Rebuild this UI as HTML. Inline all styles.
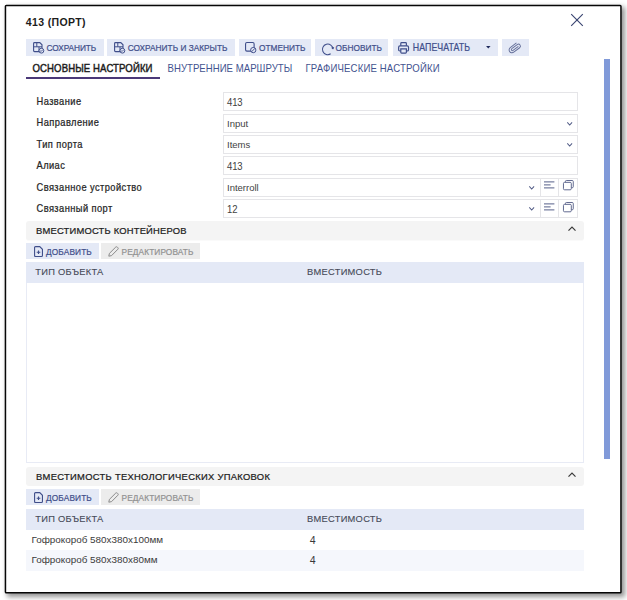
<!DOCTYPE html>
<html lang="ru">
<head>
<meta charset="utf-8">
<title>413 (ПОРТ)</title>
<style>
*{box-sizing:border-box;margin:0;padding:0}
html,body{width:627px;height:600px;background:#fff;overflow:hidden}
body{font-family:"Liberation Sans",sans-serif;color:#222;position:relative;font-size:10px}
.frame{position:absolute;left:5px;top:5px;width:616px;height:588px;background:#fff;box-shadow:3px 3px 5px 1px rgba(0,0,0,.42)}
.abs{position:absolute}
.title{left:25.7px;top:15px;font-weight:bold;font-size:10.5px;line-height:14px;color:#1c1c1c;white-space:nowrap;letter-spacing:.38px}
.btn{position:absolute;top:39px;height:17px;background:#e4e9f6;color:#3f4e8a;font-size:8.3px;line-height:17px;white-space:nowrap;-webkit-text-stroke:.18px #3f4e8a}
.btn span{position:absolute;top:0;line-height:17.5px;transform:scaleY(1.2);transform-origin:0 6px}
.btn svg{position:absolute;overflow:visible}
.btn.dis{background:#ececec;color:#929292;-webkit-text-stroke:.2px #929292}
.tab{position:absolute;top:62px;font-size:9.6px;line-height:14px;white-space:nowrap;color:#43538f;transform:scaleY(1.1);transform-origin:0 10.6px}
.tab.act{color:#1c1c1c;-webkit-text-stroke:.4px #1c1c1c;letter-spacing:.1px}
.lbl{position:absolute;left:36.5px;font-size:9.3px;line-height:14px;color:#262626;white-space:nowrap;letter-spacing:.43px;-webkit-text-stroke:.22px #262626;transform:scaleY(1.1);transform-origin:0 10.2px}
.inp{position:absolute;left:223px;height:19px;border:1px solid #e5e5e8;background:#fff;font-size:9.5px;line-height:18px;padding-left:3px;color:#424242;white-space:nowrap}
.num{display:inline-block;transform:translateY(1px) scaleY(1.17);transform-origin:0 12.5px;letter-spacing:-.1px}
.cell{position:absolute;height:19px;border:1px solid #e5e5e8;border-left:0;background:#fff}
.sec{position:absolute;left:26px;width:558px;height:19px;background:#f4f4f4;border-radius:3px;font-size:9.4px;line-height:19.5px;padding-left:10px;color:#1c1c1c;letter-spacing:.2px;white-space:nowrap;-webkit-text-stroke:.22px #1c1c1c}
.th{position:absolute;left:26px;width:558px;height:20.5px;background:#e4e9f6;font-size:9.3px;line-height:21.6px;color:#464a58;letter-spacing:.28px;white-space:nowrap;-webkit-text-stroke:.12px #464a58}
.th span{position:absolute;top:0}
.td{position:absolute;font-size:9.9px;line-height:20px;color:#3a3a3a;white-space:nowrap;letter-spacing:0}
svg{overflow:visible}
</style>
</head>
<body>
<div class="frame"></div>
<svg class="abs" style="left:0;top:0" width="627" height="600" viewBox="0 0 627 600"><rect x="5.45" y="5.5" width="615.5" height="587.3" rx="0.8" fill="#fff" stroke="#060606" stroke-width="1.5"/></svg>

<div class="abs title">413 (ПОРТ)</div>
<svg class="abs" style="left:571px;top:13.5px" width="12" height="12" viewBox="0 0 12 12"><path d="M0.2 0.2 L11.8 11.8 M11.8 0.2 L0.2 11.8" stroke="#3b4672" stroke-width="1.15" fill="none"/></svg>

<!-- toolbar -->
<div class="btn" style="left:26px;width:77.5px"><span style="left:20.5px;letter-spacing:-.08px">СОХРАНИТЬ</span><svg style="left:7px;top:3.4px" width="12" height="12" viewBox="0 0 12 12" fill="none" stroke="#3f4e8a" stroke-width="1.1"><path d="M1.5 0.6 H6.8 L9 2.8 V8.6 Q9 9.6 8 9.6 H1.5 Q0.6 9.6 0.6 8.6 V1.5 Q0.6 0.6 1.5 0.6 Z"/><path d="M0.6 4.8 H9 M3.8 0.6 V4.8 M6 4.8 V9.6" stroke-width="1"/><circle cx="8.4" cy="8.7" r="2.4" fill="#e4e9f6" stroke-width="1"/><path d="M7.3 8.8 L8.1 9.5 L9.5 8" stroke-width=".9"/></svg></div>
<div class="btn" style="left:107px;width:128px"><span style="left:20.7px">СОХРАНИТЬ И ЗАКРЫТЬ</span><svg style="left:7.3px;top:3.4px" width="12" height="12" viewBox="0 0 12 12" fill="none" stroke="#3f4e8a" stroke-width="1.1"><path d="M1.5 0.6 H6.8 L9 2.8 V8.6 Q9 9.6 8 9.6 H1.5 Q0.6 9.6 0.6 8.6 V1.5 Q0.6 0.6 1.5 0.6 Z"/><path d="M0.6 4.8 H9 M3.8 0.6 V4.8 M6 4.8 V9.6" stroke-width="1"/><circle cx="8.4" cy="8.7" r="2.4" fill="#e4e9f6" stroke-width="1"/><path d="M7.3 8.8 L8.1 9.5 L9.5 8" stroke-width=".9"/></svg></div>
<div class="btn" style="left:239px;width:72px"><span style="left:20px">ОТМЕНИТЬ</span><svg style="left:6.4px;top:2.9px" width="11.4" height="11.4" viewBox="0 0 12 12" fill="none" stroke="#3f4e8a" stroke-width="1.15"><rect x="0.6" y="0.6" width="9" height="9" rx="1.4"/><circle cx="8.7" cy="8.5" r="2.8" fill="#e4e9f6" stroke-width="1"/><path d="M6.8 10.4 L10.6 6.6" stroke-width="1"/></svg></div>
<div class="btn" style="left:315px;width:73px"><span style="left:20.6px">ОБНОВИТЬ</span><svg style="left:7.1px;top:3.5px" width="12.7" height="12.7" viewBox="0 0 12 12" fill="none" stroke="#3f4e8a" stroke-width="1"><path d="M10.4 5.6 A5 5 0 1 0 8.2 10.2"/><path d="M8.6 4.4 L10.5 6.2 L11.6 3.9 Z" fill="#3f4e8a" stroke="none"/></svg></div>
<div class="btn" style="left:392.5px;width:105.5px"><span style="left:20.3px;font-size:8.8px;letter-spacing:.05px;-webkit-text-stroke:.2px #43538f">НАПЕЧАТАТЬ</span><svg style="left:93.4px;top:6.6px" width="4.6" height="2.7" viewBox="0 0 5 3"><path d="M0 0 H5 L2.5 2.8 Z" fill="#1f2a5c"/></svg><svg style="left:5.9px;top:2.8px" width="12.9" height="12.9" viewBox="0 0 12 12" fill="none" stroke="#3f4e8a" stroke-width="1.1"><path d="M2.6 3.6 V1.4 Q2.6 0.6 3.4 0.6 H7 Q7.8 0.6 7.8 1.4 V3.6"/><path d="M2.6 8.4 H1.8 Q0.6 8.4 0.6 7.2 V4.8 Q0.6 3.6 1.8 3.6 H8.6 Q9.8 3.6 9.8 4.8 V7.2 Q9.8 8.4 8.6 8.4 H7.8"/><path d="M2.6 6.4 H7.8 V9.6 Q7.8 10.4 7 10.4 H3.4 Q2.6 10.4 2.6 9.6 Z"/></svg></div>
<div class="btn" style="left:502px;width:27px"><svg style="left:7.2px;top:3px" width="12.6" height="10.8" viewBox="0 0 14 12" fill="none" stroke="#65709a" stroke-width="1.05"><g transform="rotate(-37 7 6)"><path d="M3 4.8 H10.6 A2.2 2.2 0 0 1 10.6 9.2 H2.4 A3.2 3.2 0 0 1 2.4 2.8 H11"/><path d="M3 4.8 A1.2 1.2 0 0 0 3 7.2 H10.4"/></g></svg></div>

<!-- tabs -->
<div class="tab act" style="left:32.5px">ОСНОВНЫЕ НАСТРОЙКИ</div>
<div class="tab" style="left:167.5px;letter-spacing:.03px">ВНУТРЕННИЕ МАРШРУТЫ</div>
<div class="tab" style="left:305.5px;letter-spacing:.15px">ГРАФИЧЕСКИЕ НАСТРОЙКИ</div>
<div class="abs" style="left:26px;top:77px;width:134px;height:2px;background:#4a3878"></div>

<!-- form -->
<div class="lbl" style="top:95px">Название</div>
<div class="lbl" style="top:116px">Направление</div>
<div class="lbl" style="top:138px">Тип порта</div>
<div class="lbl" style="top:159px">Алиас</div>
<div class="lbl" style="top:181px">Связанное устройство</div>
<div class="lbl" style="top:202px">Связанный порт</div>

<div class="inp" style="top:92px;width:354.5px;"><span class="num">413</span></div>
<div class="inp" style="top:113.5px;width:354.5px">Input</div>
<div class="inp" style="top:134.7px;width:354.5px">Items</div>
<div class="inp" style="top:156.1px;width:354.5px;"><span class="num">413</span></div>
<div class="inp" style="top:177.5px;width:317.5px">Interroll</div>
<div class="cell" style="top:177.5px;left:540.5px;width:18.5px"></div>
<div class="cell" style="top:177.5px;left:559px;width:18.5px"></div>
<div class="inp" style="top:198.9px;width:317.5px;"><span class="num">12</span></div>
<div class="cell" style="top:198.9px;left:540.5px;width:18.5px"></div>
<div class="cell" style="top:198.9px;left:559px;width:18.5px"></div>

<!-- section 1 -->
<div class="sec" style="top:221px;height:20px;border-bottom:1px solid #fafafa;line-height:19.5px">ВМЕСТИМОСТЬ КОНТЕЙНЕРОВ</div>
<div class="btn" style="left:26px;top:243px;width:72.5px;height:16px"><span style="left:20px;line-height:16.5px;letter-spacing:.13px">ДОБАВИТЬ</span><svg style="left:7.7px;top:2.6px" width="9.6" height="11.5" viewBox="0 0 10 12" fill="none" stroke="#3f4e8a" stroke-width="1.15"><path d="M1.6 0.6 H6 L8.8 3.4 V10 Q8.8 11 7.8 11 H1.6 Q0.6 11 0.6 10 V1.6 Q0.6 0.6 1.6 0.6 Z"/><path d="M4.7 4.6 V8.4 M2.8 6.5 H6.6" stroke-width="1.2"/></svg></div>
<div class="btn dis" style="left:101px;top:243px;width:98.5px;height:16px"><span style="left:20.6px;line-height:16.5px;letter-spacing:.1px">РЕДАКТИРОВАТЬ</span><svg style="left:7.2px;top:2.8px" width="11" height="11" viewBox="0 0 11 11" fill="none" stroke="#8a8a8a" stroke-width="1"><path d="M0.8 10.2 L1.4 7.4 L7.8 1 Q8.6 0.4 9.4 1.2 L9.9 1.7 Q10.6 2.5 9.9 3.2 L3.6 9.6 Z"/></svg></div>
<div class="th" style="top:262px;height:21px"><span style="left:9.3px">ТИП ОБЪЕКТА</span><span style="left:281px">ВМЕСТИМОСТЬ</span></div>
<div class="abs" style="left:26px;top:283px;width:558px;height:180px;border:1px solid #e8ebf5;border-top:0"></div>

<!-- section 2 -->
<div class="sec" style="top:467px;letter-spacing:.3px">ВМЕСТИМОСТЬ ТЕХНОЛОГИЧЕСКИХ УПАКОВОК</div>
<div class="btn" style="left:26px;top:489px;width:72.5px;height:16px"><span style="left:20px;line-height:16.5px;letter-spacing:.13px">ДОБАВИТЬ</span><svg style="left:7.7px;top:2.6px" width="9.6" height="11.5" viewBox="0 0 10 12" fill="none" stroke="#3f4e8a" stroke-width="1.15"><path d="M1.6 0.6 H6 L8.8 3.4 V10 Q8.8 11 7.8 11 H1.6 Q0.6 11 0.6 10 V1.6 Q0.6 0.6 1.6 0.6 Z"/><path d="M4.7 4.6 V8.4 M2.8 6.5 H6.6" stroke-width="1.2"/></svg></div>
<div class="btn dis" style="left:101px;top:489px;width:98.5px;height:16px"><span style="left:20.6px;line-height:16.5px;letter-spacing:.1px">РЕДАКТИРОВАТЬ</span><svg style="left:7.2px;top:2.8px" width="11" height="11" viewBox="0 0 11 11" fill="none" stroke="#8a8a8a" stroke-width="1"><path d="M0.8 10.2 L1.4 7.4 L7.8 1 Q8.6 0.4 9.4 1.2 L9.9 1.7 Q10.6 2.5 9.9 3.2 L3.6 9.6 Z"/></svg></div>
<div class="th" style="top:509px"><span style="left:9.3px">ТИП ОБЪЕКТА</span><span style="left:281px">ВМЕСТИМОСТЬ</span></div>
<div class="abs" style="left:26px;top:550px;width:558px;height:20.5px;background:#f5f7fc"></div>
<div class="td" style="left:31.5px;top:529.5px">Гофрокороб 580x380x100мм</div>
<div class="td" style="left:309.8px;top:529.5px;font-size:10.6px">4</div>
<div class="td" style="left:31.5px;top:550px">Гофрокороб 580x380x80мм</div>
<div class="td" style="left:309.8px;top:550px;font-size:10.6px">4</div>

<svg class="abs" style="left:566.8px;top:121.5px" width="5.4" height="3.6" viewBox="0 0 5.4 3.6" fill="none" stroke="#545e88" stroke-width="1.05"><path d="M0.3 0.4 L2.7 3 L5.1 0.4"/></svg>
<svg class="abs" style="left:566.8px;top:142.9px" width="5.4" height="3.6" viewBox="0 0 5.4 3.6" fill="none" stroke="#545e88" stroke-width="1.05"><path d="M0.3 0.4 L2.7 3 L5.1 0.4"/></svg>
<svg class="abs" style="left:529.2px;top:185.7px" width="5.4" height="3.6" viewBox="0 0 5.4 3.6" fill="none" stroke="#545e88" stroke-width="1.05"><path d="M0.3 0.4 L2.7 3 L5.1 0.4"/></svg>
<svg class="abs" style="left:529.2px;top:207.1px" width="5.4" height="3.6" viewBox="0 0 5.4 3.6" fill="none" stroke="#545e88" stroke-width="1.05"><path d="M0.3 0.4 L2.7 3 L5.1 0.4"/></svg>
<svg class="abs" style="left:544.2px;top:181.2px" width="11" height="8" viewBox="0 0 11 8" fill="none" stroke="#566089" stroke-width="1"><path d="M0 0.9 H10.4 M0 3.9 H6.6 M0 6.9 H10.4"/></svg>
<svg class="abs" style="left:544.2px;top:202.6px" width="11" height="8" viewBox="0 0 11 8" fill="none" stroke="#566089" stroke-width="1"><path d="M0 0.9 H10.4 M0 3.9 H6.6 M0 6.9 H10.4"/></svg>
<svg class="abs" style="left:562.6px;top:180.4px" width="11.2" height="10.3" viewBox="0 0 12 11" fill="none" stroke="#566089" stroke-width="1"><path d="M2.6 2.4 V1.6 Q2.6 0.5 3.7 0.5 H9.9 Q11 0.5 11 1.6 V7.2 Q11 8.3 9.9 8.3 H9"/><rect x="0.5" y="2.5" width="8.4" height="8" rx="1.2"/></svg>
<svg class="abs" style="left:562.6px;top:201.8px" width="11.2" height="10.3" viewBox="0 0 12 11" fill="none" stroke="#566089" stroke-width="1"><path d="M2.6 2.4 V1.6 Q2.6 0.5 3.7 0.5 H9.9 Q11 0.5 11 1.6 V7.2 Q11 8.3 9.9 8.3 H9"/><rect x="0.5" y="2.5" width="8.4" height="8" rx="1.2"/></svg>
<svg class="abs" style="left:568px;top:472.2px" width="8" height="5" viewBox="0 0 8 5" fill="none" stroke="#3a3a3a" stroke-width="1.2"><path d="M0.5 4.6 L4 1 L7.5 4.6"/></svg>
<svg class="abs" style="left:568px;top:226.2px" width="8" height="5" viewBox="0 0 8 5" fill="none" stroke="#3a3a3a" stroke-width="1.2"><path d="M0.5 4.6 L4 1 L7.5 4.6"/></svg>
<!-- scrollbar -->
<div class="abs" style="left:604px;top:59px;width:6px;height:400px;background:#819ad9"></div>
</body>
</html>
